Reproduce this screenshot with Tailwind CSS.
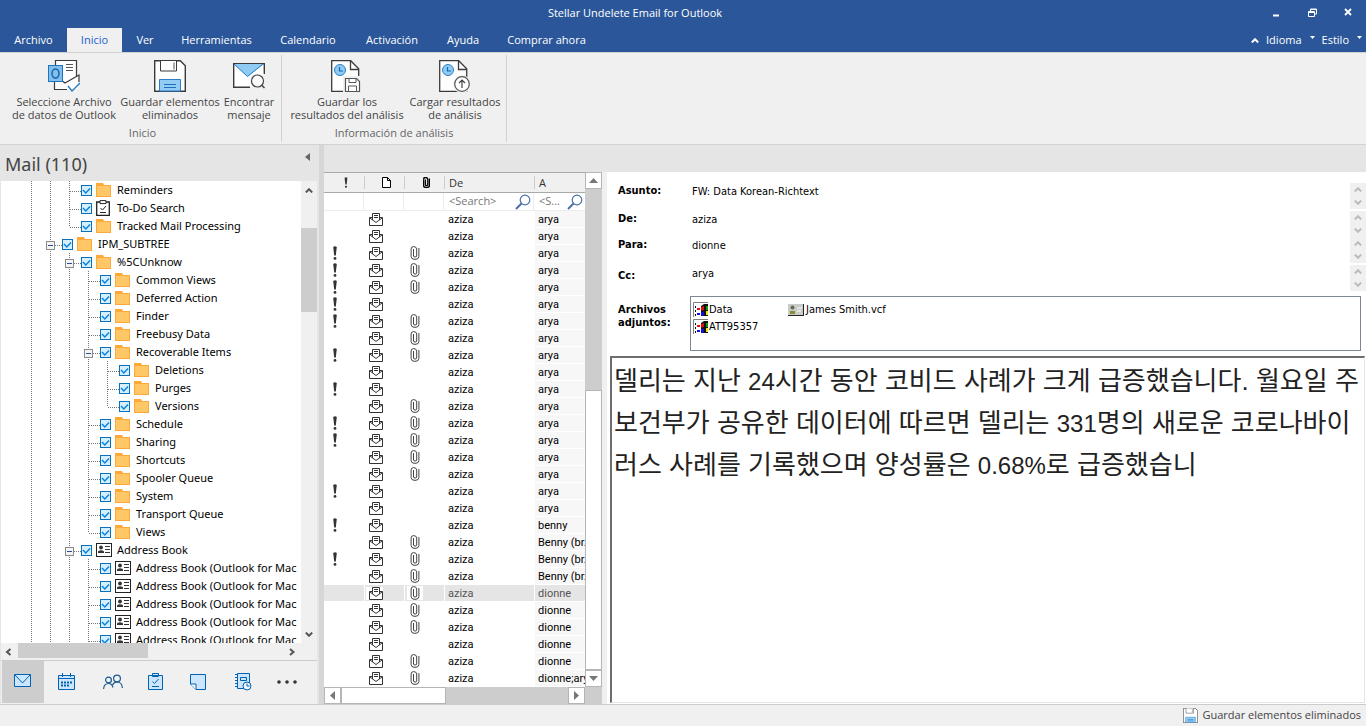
<!DOCTYPE html>
<html lang="es">
<head>
  <meta charset="UTF-8" />
  <meta name="viewport" content="width=device-width, initial-scale=1.0" />
  <title>Stellar Undelete Email for Outlook</title>
  <script src="https://cdn.jsdelivr.net/npm/@tailwindcss/browser@4"></script>
</head>

<body class="h-screen flex flex-col overflow-hidden bg-[#f0f0f0] text-[11px] text-black font-['Open_Sans',sans-serif]">

  <!-- Iconos -->
  <svg class="hidden">
    <symbol id="i-outlook" viewBox="0 0 32 32">
      <path d="M7 1h21v15l2-1v14H7z" fill="#fff" />
      <path d="M7.500 5V.5h21V17M6.500 22v7.500h12.500M13 20l4 3 14-8v7" fill="none" stroke="#3b3b3b" stroke-width="1.200" />
      <path d="M18 4.500h7M18 7.500h7M18 10.500h7" stroke="#555" />
      <rect x=".5" y="5.500" width="14" height="16" fill="#83bfea" stroke="#1e74bd" />
      <ellipse cx="7.500" cy="13.500" rx="3.500" ry="4.500" fill="none" stroke="#1168b3" stroke-width="1.500" />
      <path d="M20 26l4 5 8-8" fill="none" stroke="#2478c4" stroke-width="1.300" />
    </symbol>
    <symbol id="i-save" viewBox="0 0 32 32">
      <path d="M.7.700h25.600l5 5v25.600H.7z" fill="#fff" stroke="#3b3b3b" stroke-width="1.400" />
      <path d="M6.500 1v10h16V1" fill="#fff" stroke="#3b3b3b" />
      <path d="M20 2.500v7" stroke="#555" />
      <path d="M5.500 31V19.500h21V31z" fill="#92cbf3" stroke="#2a7fc6" />
      <path d="M10 24.500h12M10 27.500h12" stroke="#1e6fb8" />
    </symbol>
    <symbol id="i-find" viewBox="0 0 32 26">
      <path d="M17 24.300H.7V.7h30.600V11" fill="#fff" stroke="#3b3b3b" stroke-width="1.400" />
      <path d="M1 1h30L14.500 13.500z" fill="#8fcbf3" />
      <path d="M1 1l13.500 12.500L30 1" fill="none" stroke="#1e78c2" />
      <circle cx="24.500" cy="18" r="7.500" fill="#f0f0f0" />
      <circle cx="24.500" cy="18" r="6" fill="#fafafa" stroke="#444" stroke-width="1.200" />
      <path d="M28.500 22l3 3" stroke="#444" stroke-width="1.500" />
    </symbol>
    <symbol id="i-scan" viewBox="0 0 32 32">
      <path d="M.7.700h19l8 8v22.600H.7z" fill="#fff" stroke="#3b3b3b" stroke-width="1.300" />
      <path d="M19.500 1v8.500H28" fill="none" stroke="#3b3b3b" stroke-width="1.300" />
      <circle cx="9" cy="10" r="5.500" fill="#8fcbf3" stroke="#2a7fc6" />
      <path d="M8.500 7v4H12" fill="none" stroke="#1168b3" stroke-width="1.200" />
    </symbol>
    <symbol id="i-scan-save" viewBox="0 0 32 32">
      <use href="#i-scan" width="32" height="32" />
      <path d="M12 16h18v16H12z" fill="#f0f0f0" />
      <path d="M14.500 18.500h11l3 3v10h-14z" fill="#fff" stroke="#555" stroke-width="1.200" />
      <path d="M18 18.500v4h7v-4M17.500 31.500v-5.500h8v5.500" fill="none" stroke="#555" />
    </symbol>
    <symbol id="i-scan-up" viewBox="0 0 32 32">
      <use href="#i-scan" width="32" height="32" />
      <circle cx="23" cy="24" r="9" fill="#f0f0f0" />
      <circle cx="23" cy="24" r="7.300" fill="#fff" stroke="#555" stroke-width="1.200" />
      <path d="M23 28v-8M20 23l3-3 3 3" fill="none" stroke="#444" stroke-width="1.200" />
    </symbol>
    <symbol id="i-folder" viewBox="0 0 15 14">
      <path d="M0 14V0h7l1 2h7v12z" fill="#fca93a" />
      <path d="M1 3h13v10H1z" fill="#ffc766" />
    </symbol>
    <symbol id="i-todo" viewBox="0 0 15 16">
      <path d="M.7 2h12.600v13.300H.7z" fill="#fff" stroke="#222" stroke-width="1.300" />
      <path d="M4 .6h6v3H4z" fill="#fff" stroke="#222" />
      <path d="M4.500 8l2 2 3.500-4M4 12.500h6" fill="none" stroke="#222" />
    </symbol>
    <symbol id="i-card" viewBox="0 0 16 14">
      <rect x=".5" y=".5" width="15" height="13" fill="#fff" stroke="#222" />
      <circle cx="5" cy="4.500" r="1.900" fill="#333" />
      <path d="M2 10V9q0-1.800 3-1.800T8 9v1z" fill="#333" />
      <path d="M9 3.500h5M9 6.500h5M9 9.500h5" stroke="#333" />
    </symbol>
    <symbol id="i-mail" viewBox="0 0 14 13">
      <path d="M3 4.500H.5v8h13v-8H11" fill="#fff" stroke="#333" />
      <path d="M3.500 7V.5h7V7L7 9.500z" fill="#fff" />
      <path d="M3.500 7V.5h7V7M5 2.500h4M5 4.500h4M1 5l6 4.500L13 5" fill="none" stroke="#333" />
    </symbol>
    <symbol id="i-clip" viewBox="0 0 9 14">
      <path d="M.6 3v7.500Q.6 13.400 4.500 13.400T8.400 10.500V2" fill="none" stroke="currentColor" />
      <path d="M.6 3Q.6.6 3.200.6T6.200 3v7Q6.200 11 4.600 11T3 10V3" fill="none" stroke="currentColor" />
    </symbol>
    <symbol id="i-bang" viewBox="0 0 4 14">
      <path d="M.2 1Q2-.6 3.800 1L2.800 9.500H1.200z" fill="#333" />
      <circle cx="2" cy="12.400" r="1.400" fill="#333" />
    </symbol>
    <symbol id="i-lens" viewBox="0 0 16 16">
      <circle cx="10" cy="6" r="4.800" fill="none" stroke="#4a6fa5" stroke-width="1.200" />
      <path d="M6.500 9.500L1 15" stroke="#4a6fa5" stroke-width="2" />
    </symbol>
    <symbol id="i-up" viewBox="0 0 8 5"><path d="M.8 4.400L4 1.200l3.200 3.200" fill="none" stroke="currentColor" stroke-width="2" /></symbol>
    <symbol id="i-down" viewBox="0 0 8 5"><path d="M.8.600L4 3.800 7.200.600" fill="none" stroke="currentColor" stroke-width="2" /></symbol>
    <symbol id="i-exe" viewBox="0 0 15 15">
      <path d="M.5 15V.5H15" fill="none" stroke="#808080" />
      <path d="M2 4h1v2H2zM2 8h1v2H2zM2 12h1v2H2zM8 4l3-2h4v12H8z" fill="#111" />
      <path d="M4 6h3v2H4zM8 5l3-1v4l-3 .5z" fill="#e01010" />
      <path d="M4 11h3v2H4zM8 10l3-.5v4H8z" fill="#1212e0" />
      <path d="M13 4h2v4h-2z" fill="#12a012" />
      <path d="M13 9h2v4h-2z" fill="#f2e010" />
    </symbol>
    <symbol id="i-vcf" viewBox="0 0 16 12">
      <path d="M0 0h16v12H0z" fill="#222" />
      <path d="M0 0h15v11H0z" fill="#c8ccc8" />
      <circle cx="4.500" cy="3.500" r="2" fill="#666b50" />
      <path d="M2 10V7h5v3z" fill="#8b8a30" />
      <path d="M9 4h5M9 7h4" stroke="#fff" />
    </symbol>
  </svg>

  <!-- Barra de título -->
  <header class="bg-[#2b579a] text-white shrink-0">
    <div class="flex h-7">
      <h1 class="flex-1 pl-3 text-center leading-[26px]">Stellar Undelete Email for Outlook</h1>
      <button class="w-9 grid place-items-center" aria-label="Minimizar"><svg class="w-2 h-2"><path d="M1 5.500h6" stroke="#fff" stroke-width="2" /></svg></button>
      <button class="w-9 grid place-items-center pb-1" aria-label="Restaurar"><svg class="w-[9px] h-[9px]" fill="none" stroke="#fff"><path d="M2.500 3V1h6v5H6.500M.5 3.500h6v5h-6zM.5 4.500h6M2.500 1.500h6" /></svg></button>
      <button class="w-9 grid place-items-center pb-1" aria-label="Cerrar"><svg class="w-2 h-2" stroke="#fff" stroke-width="1.800"><path d="M1 1l6 6M7 1L1 7" /></svg></button>
    </div>
    <nav class="flex h-6">
      <button class="w-[67px]">Archivo</button>
      <button class="w-[55px] bg-[#f0f0f0] text-[#1a5fd0]">Inicio</button>
      <button class="w-[46px]">Ver</button>
      <button class="w-[97px]">Herramientas</button>
      <button class="w-[86px]">Calendario</button>
      <button class="w-[82px]">Activación</button>
      <button class="w-[60px]">Ayuda</button>
      <button class="w-[107px]">Comprar ahora</button>
      <div class="ml-auto flex items-center gap-[7px] pr-1">
        <svg class="w-2 h-[5px]"><use href="#i-up" /></svg>
        <button class="flex items-center gap-2">Idioma <svg class="w-[5px] h-3" fill="#fff"><path d="M0 2h5L2.500 5z" /></svg></button>
        <button class="flex items-center gap-2">Estilo <svg class="w-[5px] h-3" fill="#fff"><path d="M0 2h5L2.500 5z" /></svg></button>
      </div>
    </nav>
  </header>

  <!-- Cinta -->
  <div class="h-[93px] shrink-0 flex py-[2px] border-y border-[#d2d2d2] text-[#444] leading-[13px]">
    <section class="w-[282px] flex flex-col border-r border-[#d2d2d2]">
      <div class="flex pt-[5px] pl-2">
        <button class="w-28 flex flex-col items-center gap-[3px]"><svg class="w-8 h-8"><use href="#i-outlook" /></svg><span class="whitespace-nowrap">Seleccione Archivo<br>de datos de Outlook</span></button>
        <button class="w-[100px] flex flex-col items-center gap-[3px]"><svg class="w-8 h-8"><use href="#i-save" /></svg><span class="whitespace-nowrap">Guardar elementos<br>eliminados</span></button>
        <button class="w-[58px] flex flex-col items-center gap-[3px]"><svg class="w-8 h-8"><use href="#i-find" /></svg><span class="whitespace-nowrap">Encontrar<br>mensaje</span></button>
      </div>
      <h2 class="text-center text-[#666] pt-[5px] pl-1">Inicio</h2>
    </section>
    <section class="w-[225px] flex flex-col border-r border-[#d2d2d2]">
      <div class="flex pt-[5px] pl-2">
        <button class="w-[114px] flex flex-col items-center gap-[3px]"><svg class="w-8 h-8"><use href="#i-scan-save" /></svg><span class="whitespace-nowrap">Guardar los<br>resultados del análisis</span></button>
        <button class="w-[102px] flex flex-col items-center gap-[3px]"><svg class="w-8 h-8"><use href="#i-scan-up" /></svg><span class="whitespace-nowrap">Cargar resultados<br>de análisis</span></button>
      </div>
      <h2 class="text-center text-[#666] pt-[5px]">Información de análisis</h2>
    </section>
  </div>

  <main class="flex-1 min-h-0 flex">
    <!-- Panel de carpetas -->
    <aside class="w-[319px] shrink-0 flex flex-col bg-[#e5e5e5] border-l border-[#e5e5e5] pr-[2px]">
      <div class="h-9 flex justify-between pl-1 pr-[7px]">
        <h2 class="text-lg leading-[38px] text-[#444] font-['Noto_Sans',sans-serif]">Mail (110)</h2>
        <svg class="w-[5px] h-[8px] mt-2" fill="#666"><path d="M5 0v8L0 4z" /></svg>
      </div>
      <div class="flex-1 min-h-0 flex">
        <ul id="tree" class="flex-1 min-w-0 overflow-hidden bg-white pl-[21px] font-['Noto_Sans',sans-serif]"></ul>
        <div class="w-4 bg-[#f0f0f0] flex flex-col items-center text-[#555]">
          <svg class="w-2 h-[5px] mt-[7px]"><use href="#i-up" /></svg>
          <div class="w-full h-[84px] mt-[35px] bg-[#cdcdcd]"></div>
          <svg class="w-2 h-[5px] mt-auto mb-[6px]"><use href="#i-down" /></svg>
        </div>
      </div>
      <div class="h-[17px] bg-[#f0f0f0] flex items-center pr-[21px] text-[#555]">
        <svg class="w-[17px] h-2" fill="none" stroke="currentColor" stroke-width="2"><path d="M9.500 1L6 4l3.500 3" /></svg>
        <div class="w-[130px] h-[15px] bg-[#cdcdcd] mb-[2px]"></div>
        <svg class="w-2 h-2 ml-auto" fill="none" stroke="currentColor" stroke-width="2"><path d="M2 1l3.500 3L2 7" /></svg>
      </div>
      <nav class="h-11 border-t border-[#ccc] bg-[#f0f0f0] flex items-center pl-px pb-px">
        <button class="w-[42px] h-[42px] bg-[#cdcdcd] grid place-items-center pb-1 pr-px" aria-label="Correo">
          <svg class="w-[17px] h-[13px]" fill="#cce6ff" stroke="#0063b1"><path d="M.5.500h16v12H.5z" /><path d="M1 1l7.500 8L16 1" /></svg>
        </button>
        <button class="w-11 grid place-items-center pb-px" aria-label="Calendario">
          <svg class="w-[17px] h-[17px]" fill="#cce6ff" stroke="#0063b1"><path d="M.5 2.500h16v14H.5zM.5 5.500h16M4.500 0v4M12.500 0v4" /><path d="M3 9.500h11M3 12.500h8" stroke-width="2" stroke-dasharray="2 1" /></svg>
        </button>
        <button class="w-[50px] grid place-items-center pb-px" aria-label="Contactos">
          <svg class="w-5 h-[16px]" fill="none" stroke="#1c5a94" stroke-width="1.200"><circle cx="5.500" cy="6" r="2.900" /><circle cx="14" cy="4.500" r="3.400" /><path d="M.6 15q.3-5.500 5-5.500 3.400 0 4.400 4M9.500 11Q11 8 14 8q5 0 5.400 6" /></svg>
        </button>
        <button class="w-[34px] grid place-items-center pb-px" aria-label="Tareas">
          <svg class="w-[15px] h-[17px]" fill="#cce6ff" stroke="#0063b1"><path d="M.5 2.500h14v14H.5zM4.500.500h6v3h-6z" /><path d="M4.500 8.500l2 2 4-4.500M4 13.500h7" fill="none" /></svg>
        </button>
        <button class="w-[52px] grid place-items-center" aria-label="Notas">
          <svg class="w-4 h-4" fill="#cce6ff" stroke="#0063b1"><path d="M.5.500h15v15H6L.5 10z" /><path d="M.5 10H6v5.500" fill="#fff" /></svg>
        </button>
        <button class="w-[38px] grid place-items-center" aria-label="Diario">
          <svg class="w-[17px] h-[18px]" fill="#cce6ff" stroke="#0063b1"><path d="M2.500.500h12v15h-12zM5.500 4.500h6v3h-6z" /><path d="M1 1v15" stroke-width="2" stroke-dasharray="1 2" /><circle cx="12" cy="13" r="4" fill="#eef6ff" /><path d="M12 10.500V13h2.500" fill="none" /></svg>
        </button>
        <button class="w-[50px] grid place-items-center pb-px" aria-label="Más">
          <svg class="w-5 h-1" fill="#333"><circle cx="2" cy="2" r="1.800" /><circle cx="10" cy="2" r="1.800" /><circle cx="18" cy="2" r="1.800" /></svg>
        </button>
      </nav>
    </aside>
    <div class="w-[5px] shrink-0 bg-[#d6d6d6]"></div>

    <div class="flex-1 min-w-0 flex flex-col">
      <div class="h-[27px] shrink-0 bg-[#e5e5e5]"></div>
      <div class="flex-1 min-h-0 flex">

        <!-- Lista de mensajes -->
        <section class="w-[278px] shrink-0 flex flex-col bg-white">
          <div class="flex-1 min-h-0 flex">
            <div class="flex-1 min-w-0 overflow-hidden">
              <table class="w-full table-fixed border-separate border-spacing-0 font-[Roboto,sans-serif]">
                <colgroup>
                  <col class="w-10"><col class="w-10"><col class="w-10"><col class="w-[90px]"><col>
                </colgroup>
                <thead class="text-left text-[#333]">
                  <tr class="h-[21px] bg-[#f0f0f0] font-['Open_Sans',sans-serif]">
                    <th class="p-0 pl-[20px] border-y border-[#a9a9a9]" aria-label="Importancia"><svg class="w-[4px] h-[11px]"><use href="#i-bang" /></svg></th>
                    <th class="p-0 border-y border-[#a9a9a9]" aria-label="Tipo"><div class="h-[13px] pt-px pl-[17px] border-l border-[#ccc]"><svg class="w-[9px] h-[11px]" fill="#fff" stroke="#000"><path d="M.5.500h5l3 3v7h-8zM5.500.500v3h3" /></svg></div></th>
                    <th class="p-0 border-y border-[#a9a9a9]" aria-label="Adjunto"><div class="h-[13px] pt-px pl-[18px] border-l border-[#ccc] text-black"><svg class="w-[7px] h-[11px]" stroke-width="1.800"><use href="#i-clip" /></svg></div></th>
                    <th class="p-0 font-normal border-y border-[#a9a9a9]"><div class="h-[13px] leading-[13px] pl-[4px] border-l border-[#ccc]">De</div></th>
                    <th class="p-0 font-normal border-y border-[#a9a9a9]"><div class="h-[13px] leading-[13px] pl-[4px] border-l border-[#ccc]">A</div></th>
                  </tr>
                  <tr class="h-[18px]">
                    <td class="p-0 border-b border-r border-[#ececec]"></td>
                    <td class="p-0 border-b border-r border-[#ececec]"></td>
                    <td class="p-0 border-b border-r border-[#ececec]"></td>
                    <td class="p-0 border-b border-r border-[#ececec]">
                      <div class="flex items-center pl-[5px] pr-[2px]"><input aria-label="Buscar De" placeholder="&lt;Search&gt;" class="w-full min-w-0 h-4 placeholder:text-[#777] font-['Open_Sans',sans-serif]"><svg class="w-4 h-4 shrink-0"><use href="#i-lens" /></svg></div>
                    </td>
                    <td class="p-0 border-b border-[#ececec]">
                      <div class="flex items-center pl-[5px] pr-[2px]"><input aria-label="Buscar A" placeholder="&lt;S..." class="w-full min-w-0 h-4 placeholder:text-[#777] font-['Open_Sans',sans-serif]"><svg class="w-4 h-4 shrink-0"><use href="#i-lens" /></svg></div>
                    </td>
                  </tr>
                </thead>
                <tbody id="messages"></tbody>
              </table>
            </div>
            <div class="w-[17px] shrink-0 bg-[#cdcdcd] flex flex-col">
              <button class="h-[17px] bg-white border border-[#b5b5b5] grid place-items-center" aria-label="Subir"><svg class="w-[9px] h-[5px]" fill="#777"><path d="M0 5h9L4.500 0z" /></svg></button>
              <div class="mt-auto h-[280px] bg-white border border-[#b5b5b5]"></div>
              <button class="h-[17px] bg-white border border-[#b5b5b5] grid place-items-center" aria-label="Bajar"><svg class="w-[9px] h-[5px]" fill="#777"><path d="M0 0h9L4.500 5z" /></svg></button>
            </div>
          </div>
          <div class="h-[17px] shrink-0 bg-[#cdcdcd] flex pr-[17px]">
            <button class="w-[17px] bg-white border border-[#b5b5b5] grid place-items-center" aria-label="Izquierda"><svg class="w-[5px] h-[9px]" fill="#777"><path d="M5 0v9L0 4.500z" /></svg></button>
            <div class="w-[105px] bg-white border border-[#b5b5b5]"></div>
            <button class="w-[17px] ml-auto bg-white border border-[#b5b5b5] grid place-items-center" aria-label="Derecha"><svg class="w-[5px] h-[9px]" fill="#777"><path d="M0 0v9l5-4.500z" /></svg></button>
          </div>
        </section>

        <!-- Vista del mensaje -->
        <section class="flex-1 min-w-0 ml-[5px] bg-white flex flex-col pt-[11px] font-['DejaVu_Sans_Condensed','DejaVu_Sans',sans-serif] leading-[14px]">
          <div id="fields" class="pl-[11px]"></div>
          <div class="flex pl-[11px] mt-[5px] pr-[5px]">
            <h3 class="w-[72px] pt-[7px] font-bold leading-[13px]">Archivos<br>adjuntos:</h3>
            <ul class="flex-1 h-[55px] pt-1 pl-[2px] border border-[#7f8694] grid grid-flow-col grid-rows-[17px_17px] auto-cols-[95px]">
              <li class="flex items-center"><svg class="w-[15px] h-[15px] shrink-0"><use href="#i-exe" /></svg><span class="pl-px">Data</span></li>
              <li class="flex items-center"><svg class="w-[15px] h-[15px] shrink-0"><use href="#i-exe" /></svg><span class="pl-px">ATT95357</span></li>
              <li class="flex items-center"><svg class="w-4 h-3 shrink-0"><use href="#i-vcf" /></svg><span class="pl-[2px] whitespace-nowrap">James Smith.vcf</span></li>
            </ul>
          </div>
          <article lang="ko" class="flex-1 mt-[5px] ml-[3px] mr-px mb-px pl-[2px] pt-[2px] border-t-2 border-l-2 border-[#6d6d6d] border-r border-b border-r-[#e3e3e3] border-b-[#e3e3e3] text-[26px] leading-[42px] text-[#222] whitespace-nowrap overflow-hidden font-['Liberation_Sans','Noto_Sans_CJK_KR',sans-serif]">
            델리는 지난 <span class="text-2xl">24</span>시간 동안 코비드 사례가 크게 급증했습니다. 월요일 주<br>
            보건부가 공유한 데이터에 따르면 델리는 <span class="text-2xl">331</span>명의 새로운 코로나바이<br>
            러스 사례를 기록했으며 양성률은 <span class="text-2xl">0.68%</span>로 급증했습니
          </article>
        </section>
      </div>
    </div>
  </main>

  <!-- Barra de estado -->
  <footer class="h-[22px] shrink-0 border-t border-[#ccc] flex justify-end items-center pr-[5px] text-[#444]">
    <button class="flex items-center gap-1"><svg class="w-[15px] h-[15px]"><use href="#i-save" /></svg>Guardar elementos eliminados</button>
  </footer>

  <script>
    // Guías por fila: v = línea, t = rama, l = última rama, m = nodo abierto
    const tree = [
      ['vvt', 'folder', 'Reminders'],
      ['vvt', 'todo', 'To-Do Search'],
      ['vvl', 'folder', 'Tracked Mail Processing'],
      ['vm', 'folder', 'IPM_SUBTREE'],
      ['vvm', 'folder', '%5CUnknow'],
      ['vvvt', 'folder', 'Common Views'],
      ['vvvt', 'folder', 'Deferred Action'],
      ['vvvt', 'folder', 'Finder'],
      ['vvvt', 'folder', 'Freebusy Data'],
      ['vvvm', 'folder', 'Recoverable Items'],
      ['vvvvt', 'folder', 'Deletions'],
      ['vvvvt', 'folder', 'Purges'],
      ['vvvvl', 'folder', 'Versions'],
      ['vvvt', 'folder', 'Schedule'],
      ['vvvt', 'folder', 'Sharing'],
      ['vvvt', 'folder', 'Shortcuts'],
      ['vvvt', 'folder', 'Spooler Queue'],
      ['vvvt', 'folder', 'System'],
      ['vvvt', 'folder', 'Transport Queue'],
      ['vvvl', 'folder', 'Views'],
      ['vvm', 'card', 'Address Book'],
      ['vvvt', 'card', 'Address Book (Outlook for Mac'],
      ['vvvt', 'card', 'Address Book (Outlook for Mac'],
      ['vvvt', 'card', 'Address Book (Outlook for Mac'],
      ['vvvt', 'card', 'Address Book (Outlook for Mac'],
      ['vvvt', 'card', 'Address Book (Outlook for Mac'],
    ];
    const lines = {
      v: 'M9.500 0v18',
      t: 'M9.500 0v18M9.500 10.500H21',
      l: 'M9.500 0v10M9.500 10.500H21',
      m: 'M9.500 0v18M14 10.500H21',
    };
    const icons = {
      folder: '<svg class="w-[15px] h-[14px]"><use href="#i-folder" /></svg>',
      todo: '<svg class="w-[15px] h-4"><use href="#i-todo" /></svg>',
      card: '<svg class="w-4 h-[14px]"><use href="#i-card" /></svg>',
    };
    const box = '<rect x="5.500" y="6.500" width="8" height="8" fill="#f4f4f4" stroke="#8a8a8a" /><path d="M7 10.500h5" stroke="#2a4d9b" />';
    document.getElementById('tree').innerHTML = tree.map(([guides, icon, name], i) => `
      <li class="h-[18px] flex whitespace-nowrap">
        ${[...guides].map(g => `<svg class="w-[19px] h-[18px] shrink-0 overflow-visible"><path d="${lines[g]}" fill="none" stroke="#777" stroke-dasharray="1 1" shape-rendering="crispEdges" />${g === 'm' ? box : ''}</svg>`).join('')}
        <span class="grid w-[11px] h-[11px] ml-[2px] mt-1 shrink-0">
          <input type="checkbox" id="n${i}" checked class="appearance-none col-start-1 row-start-1 w-[11px] h-[11px] border border-[#0a70b8] bg-[#d5efff]">
          <svg class="col-start-1 row-start-1 w-[11px] h-[11px] pointer-events-none"><path d="M2 5l2.800 3L9 3.500" fill="none" stroke="#0a84e0" stroke-width="1.500" /></svg>
        </span>
        <label for="n${i}" class="flex items-center ml-1 leading-[18px]"><span class="w-[21px] shrink-0">${icons[icon]}</span>${name}</label>
      </li>`).join('');

    // [importante, adjunto, para]
    const messages = [
      [0, 0, 'arya'], [0, 0, 'arya'], [1, 1, 'arya'], [1, 1, 'arya'], [1, 1, 'arya'], [1, 0, 'arya'], [1, 1, 'arya'],
      [0, 1, 'arya'], [1, 1, 'arya'], [0, 0, 'arya'], [1, 0, 'arya'], [0, 1, 'arya'], [1, 1, 'arya'], [1, 1, 'arya'],
      [0, 1, 'arya'], [0, 1, 'arya'], [1, 0, 'arya'], [0, 0, 'arya'], [1, 0, 'benny'], [0, 1, 'Benny (br.'],
      [1, 1, 'Benny (br.'], [0, 1, 'Benny (br.'], [0, 1, 'dionne'], [0, 1, 'dionne'], [0, 1, 'dionne'],
      [0, 0, 'dionne'], [0, 1, 'dionne'], [0, 1, 'dionne;ary'],
    ];
    const selected = 22;
    document.getElementById('messages').innerHTML = messages.map(([bang, clip, to], i) => `
      <tr class="h-[17px] leading-[15px] ${i === selected ? 'bg-[#e5e5e5] text-[#555]' : ''}">
        <td class="p-0 pl-[9px] border-b border-white">${bang ? '<svg class="w-1 h-[14px]"><use href="#i-bang" /></svg>' : ''}</td>
        <td class="p-0 pl-px border-b border-l border-white"><svg class="w-[17px] h-[13px] pl-[3px] bg-white"><use href="#i-mail" /></svg></td>
        <td class="p-0 pl-[2px] border-b border-l border-white">${clip ? '<svg class="w-4 h-[14px] bg-white text-[#444]"><use href="#i-clip" /></svg>' : ''}</td>
        <td class="p-0 pt-px pl-[3px] border-b border-l border-white">aziza</td>
        <td class="p-0 pt-px pl-[3px] border-b border-l border-white overflow-hidden whitespace-nowrap ${i === selected ? '' : 'bg-[#f7f7f7]'}">${to}</td>
      </tr>`).join('');

    // Cabeceras del mensaje
    const fields = [
      ['Asunto:', 'FW: Data Korean-Richtext', 'mb-[2px]', 'pt-px'],
      ['De:', 'aziza', '', 'pt-px'],
      ['Para:', 'dionne', 'mb-[2px]', 'pt-px'],
      ['Cc:', 'arya', '', 'pt-1'],
    ];
    document.getElementById('fields').innerHTML = fields.map(([label, value, gap, pad], i) => `
      <div class="flex h-[26px] ${gap}">
        <label for="f${i}" class="w-[74px] font-bold ${pad}">${label}</label>
        <input id="f${i}" value="${value}" readonly class="flex-1 min-w-0 h-4 outline-none">
        <div class="w-4 bg-[#f0f0f0] text-[#bbb] flex flex-col items-center justify-between py-1">
          <svg class="w-2 h-[5px]"><use href="#i-up" /></svg>
          <svg class="w-2 h-[5px]"><use href="#i-down" /></svg>
        </div>
      </div>`).join('');
  </script>
</body>
</html>
